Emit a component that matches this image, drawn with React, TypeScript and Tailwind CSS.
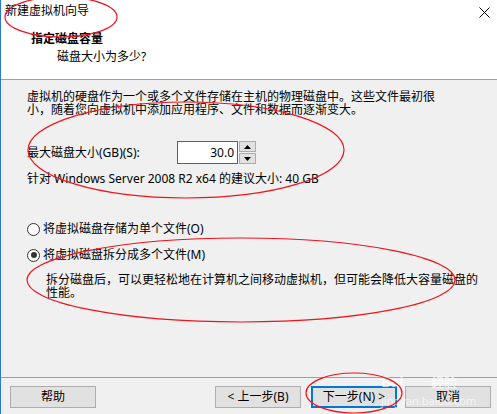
import React from 'react';

const font = { fontFamily: '"Noto Sans", "Noto Sans CJK SC", sans-serif' };

function Radio({ checked, label }: { checked?: boolean; label: string }) {
    return (
        <div className="flex items-center h-[16px] leading-[16px]">
            <span className="w-[13px] h-[13px] rounded-full border border-[#333] bg-white flex items-center justify-center">
                {checked && <span className="w-[6px] h-[6px] rounded-full bg-[#333]" />}
            </span>
            <span className="ml-[3px]">{label}</span>
        </div>
    );
}

function Btn({ children, primary, className = '' }: { children: React.ReactNode; primary?: boolean; className?: string }) {
    return (
        <div
            className={`w-[86px] h-[22px] flex items-center justify-center bg-[#e1e1e1] leading-[16px] ${primary ? 'border-2 border-[#0078d7]' : 'border border-[#adadad]'
                } ${className}`}
        >
            {children}
        </div>
    );
}

export default function App() {
    return (
        <div
            className="relative w-[497px] h-[414px] overflow-hidden flex flex-col bg-[#f0f0f0] border-l border-[#2b79d0] text-[12px] text-black"
            style={font}
        >
            {/* 헤더 */}
            <div className="h-[80px] bg-white border-b border-[#a0a0a0] pl-[4px] pt-[3px] flex flex-col">
                <div className="flex items-center leading-[16px]">
                    <span>新建虚拟机向导</span>
                    <svg className="ml-auto mr-[7px] mt-[2px]" width="11" height="11" viewBox="0 0 11 11">
                        <path d="M0.5 0.5 L10.5 10.5 M10.5 0.5 L0.5 10.5" stroke="#000" strokeWidth="1" fill="none" />
                    </svg>
                </div>
                <div className="ml-[26px] mt-[12px] font-bold leading-[16px]">指定磁盘容量</div>
                <div className="ml-[52px] mt-[2px] leading-[16px]">磁盘大小为多少?</div>
            </div>

            {/* 본문 */}
            <div className="flex-1 pl-[26px] pt-[10px] flex flex-col">
                <p className="leading-[13px] whitespace-nowrap">
                    虚拟机的硬盘作为一个或多个文件存储在主机的物理磁盘中。这些文件最初很
                    <br />
                    小，随着您向虚拟机中添加应用程序、文件和数据而逐渐变大。
                </p>

                <div className="mt-[25px] h-[23px] flex items-center">
                    <span className="w-[150px] leading-[16px]">最大磁盘大小(GB)(S):</span>
                    <div className="w-[61px] h-[23px] bg-white border border-[#0078d7] flex items-center justify-end pr-[3px] leading-[16px]">
                        30.0
                    </div>
                    <div className="ml-[1px] w-[17px] h-[23px] flex flex-col gap-[1px]">
                        <div className="flex-1 bg-[#e1e1e1] border border-[#adadad] flex items-center justify-center">
                            <svg width="7" height="4" viewBox="0 0 7 4"><path d="M3.5 0 L7 4 L0 4 Z" fill="#000" /></svg>
                        </div>
                        <div className="flex-1 bg-[#e1e1e1] border border-[#adadad] flex items-center justify-center">
                            <svg width="7" height="4" viewBox="0 0 7 4"><path d="M0 0 L7 0 L3.5 4 Z" fill="#000" /></svg>
                        </div>
                    </div>
                </div>

                <div className="mt-[7px] leading-[16px]">针对 Windows Server 2008 R2 x64 的建议大小: 40 GB</div>

                <div className="mt-[34px]">
                    <Radio label="将虚拟磁盘存储为单个文件(O)" />
                </div>
                <div className="mt-[10px]">
                    <Radio checked label="将虚拟磁盘拆分成多个文件(M)" />
                </div>
                <p className="mt-[10px] ml-[19px] leading-[13px] whitespace-nowrap">
                    拆分磁盘后，可以更轻松地在计算机之间移动虚拟机，但可能会降低大容量磁盘的
                    <br />
                    性能。
                </p>
            </div>

            {/* 하단 버튼 */}
            <div className="h-[37px] border-t border-[#a0a0a0] pt-[8px] flex items-start">
                <Btn className="ml-[9px]">帮助</Btn>
                <div className="flex-1" />
                <Btn>&lt; 上一步(B)</Btn>
                <Btn primary className="ml-[10px]">下一步(N) &gt;</Btn>
                <Btn className="ml-[8px] mr-[6px]">取消</Btn>
            </div>

            {/* 워터마크 */}
            <div className="absolute left-[380px] top-[374px] pointer-events-none text-white/70 leading-none">
                <div className="text-[15px] font-bold tracking-tight">Bai<span className="ml-[28px] text-[13px]">经验</span></div>
                <div className="mt-[6px] text-[11px]">jingyan.baidu.com</div>
            </div>

            {/* 빨간 표시 */}
            <svg className="absolute inset-0 pointer-events-none" width="497" height="414" viewBox="0 0 497 414">
                <g fill="none" stroke="#f2121c" strokeWidth="1.2">
                    <ellipse cx="60" cy="17" rx="56" ry="20" />
                    <ellipse cx="185" cy="150" rx="158" ry="48" />
                    <ellipse cx="240" cy="280" rx="214" ry="42" />
                    <ellipse cx="353" cy="393" rx="48" ry="20" />
                </g>
            </svg>
        </div>
    );
}
